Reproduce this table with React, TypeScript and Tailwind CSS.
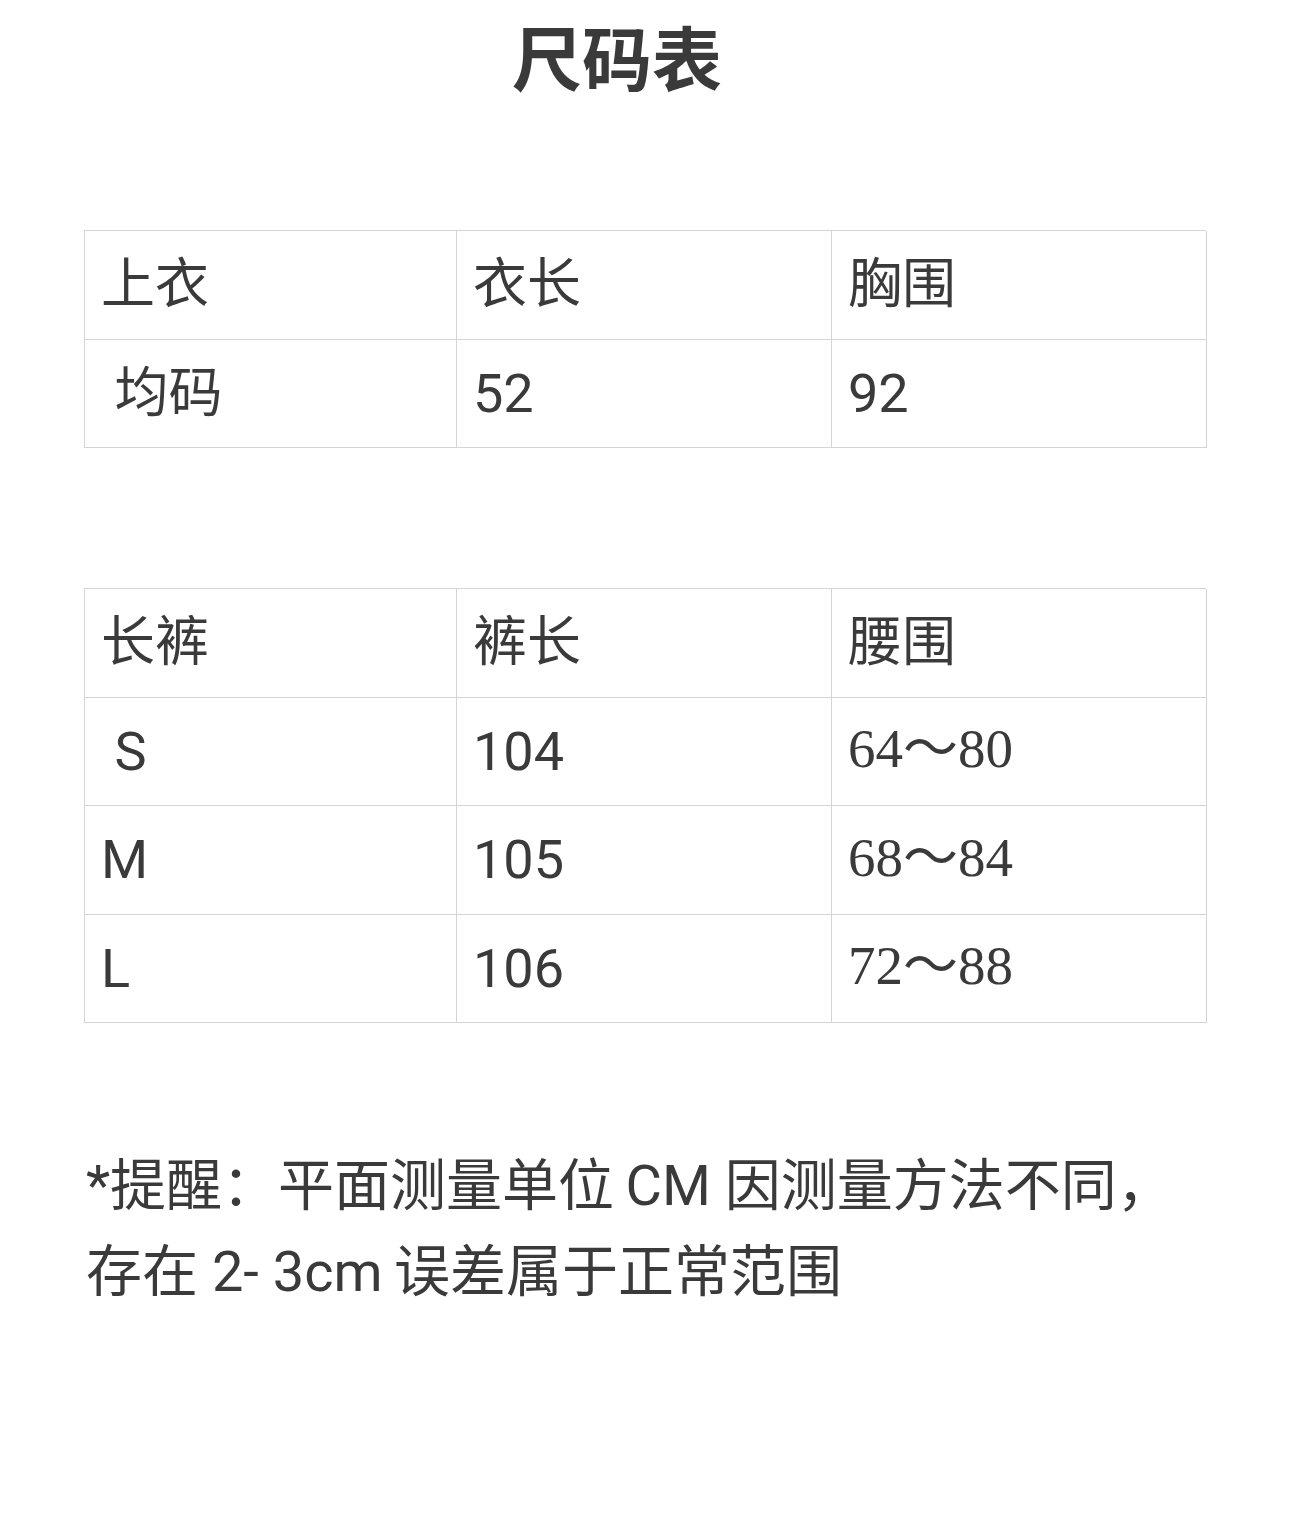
const tops = [
  ["上衣", "衣长", "胸围"],
  ["\u00a0均码", "52", "92"],
]

const pants = [
  ["长裤", "裤长", "腰围"],
  ["\u00a0S", "104", "64～80"],
  ["M", "105", "68～84"],
  ["L", "106", "72～88"],
]

const sans = "font-['Roboto','Noto_Sans_CJK_SC',sans-serif]"

function SizeTable({ rows }: { rows: string[][] }) {
  return (
    <div className="mx-[84px] w-[1122px] border-t border-l border-[#d4d4d4]">
      {rows.map((row, i) => (
        <div key={i} className="grid grid-cols-[372px_375px_375px] h-[108.5px]">
          {row.map((cell, j) => {
            const serif = /～/.test(cell)
            return (
              <div
                key={j}
                className={`flex items-center pl-[16px] border-r border-b border-[#d4d4d4] text-[#3a3a3a] ${
                  serif ? "font-['Liberation_Serif','Noto_Sans_CJK_SC',serif] text-[55px] pb-[4px]" : `${sans} text-[54px]`
                }`}
              >
                {cell}
              </div>
            )
          })}
        </div>
      ))}
    </div>
  )
}

export default function App() {
  return (
    <div className={`w-[1290px] h-[1522px] bg-white ${sans}`}>
      <h1 className="pt-[17px] pr-[56px] text-center text-[70px] font-bold text-[#3a3a3a] leading-[1.3]">尺码表</h1>
      <div className="mt-[122px]">
        <SizeTable rows={tops} />
      </div>
      <div className="mt-[140px]">
        <SizeTable rows={pants} />
      </div>
      <p className="mt-[120px] pl-[86px] text-[56px] leading-[86px] text-[#3a3a3a]">
        *提醒：平面测量单位&thinsp;CM 因测量方法不同，
        <br />
        存在 2- 3cm&thinsp;误差属于正常范围
      </p>
    </div>
  )
}
